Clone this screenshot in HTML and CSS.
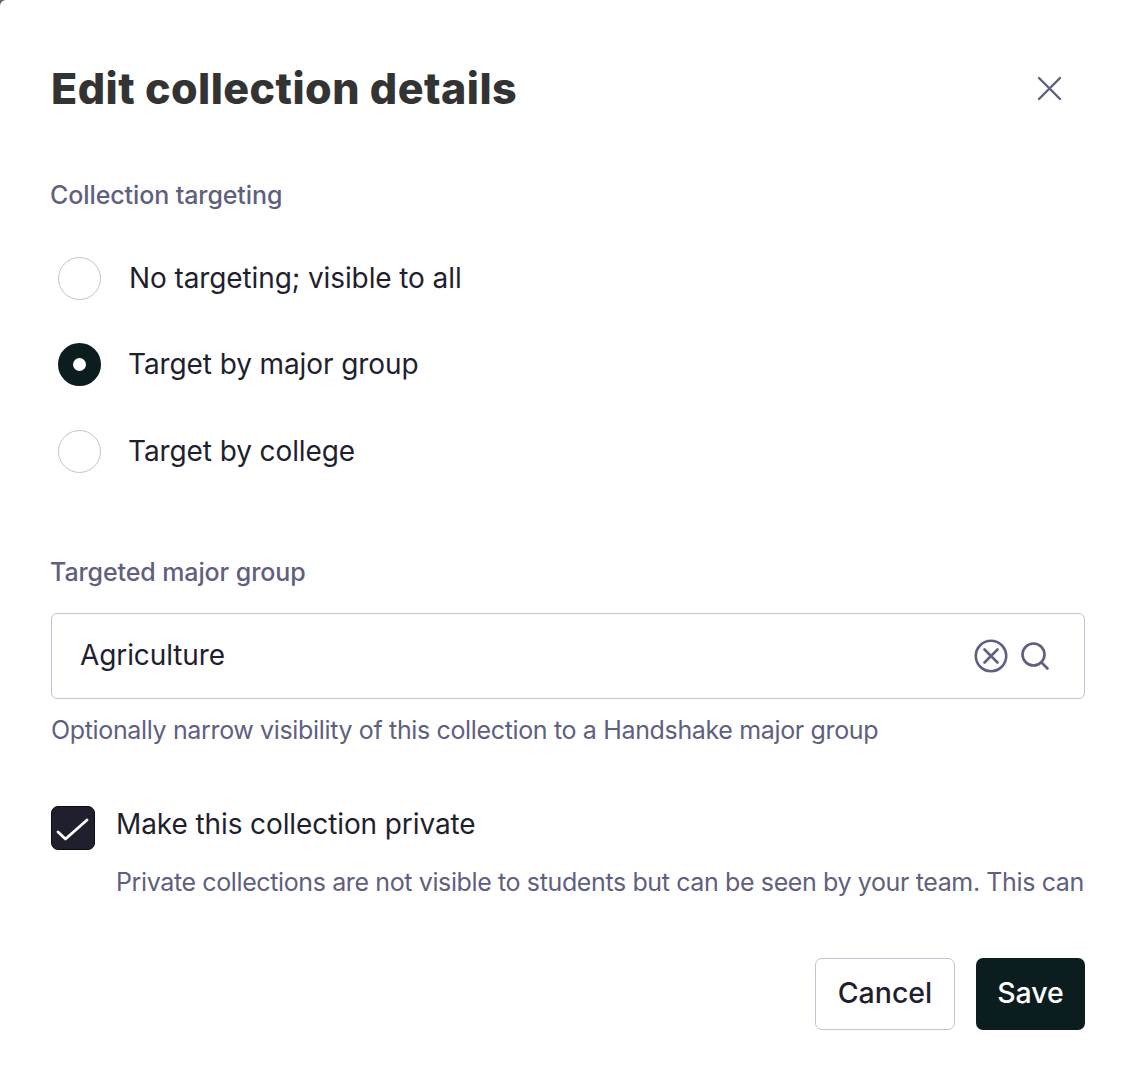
FILE: index.html
```html
<!DOCTYPE html>
<html lang="en">
<head>
    <meta charset="UTF-8">
    <title>Edit collection details</title>
    <link rel="stylesheet" href="styles.css">
</head>
<body>
    <div class="modal">
        <header class="modal-header">
            <h1 class="modal-title">Edit collection details</h1>
            <button class="close-button" aria-label="Close">
                <svg width="25" height="25" viewBox="0 0 25 25" fill="none" stroke="#5f5f7f" stroke-width="2.4" stroke-linecap="round">
                    <path d="M2 2L23 23M23 2L2 23"/>
                </svg>
            </button>
        </header>

        <section class="targeting">
            <div class="field-label">Collection targeting</div>
            <div class="radio-list">
                <label class="radio-row">
                    <span class="radio"></span>
                    <span class="radio-text first">No targeting; visible to all</span>
                </label>
                <label class="radio-row">
                    <span class="radio checked"></span>
                    <span class="radio-text">Target by major group</span>
                </label>
                <label class="radio-row">
                    <span class="radio"></span>
                    <span class="radio-text">Target by college</span>
                </label>
            </div>
        </section>

        <section class="major-group">
            <div class="field-label">Targeted major group</div>
            <div class="search-input">
                <span class="search-value">Agriculture</span>
                <svg class="clear-icon" width="34" height="34" viewBox="0 0 34 34" fill="none" stroke="#5f5f7f" stroke-width="2.6" stroke-linecap="round">
                    <circle cx="17" cy="17" r="15.2"/>
                    <path d="M10.5 10.5L23.5 23.5M23.5 10.5L10.5 23.5"/>
                </svg>
                <svg class="search-icon" width="28" height="28" viewBox="0 0 28 28" fill="none" stroke="#5f5f7f" stroke-width="2.6" stroke-linecap="round">
                    <circle cx="12.5" cy="12.5" r="11"/>
                    <path d="M20.5 20.5L26.5 26.5"/>
                </svg>
            </div>
            <div class="help-text">Optionally narrow visibility of this collection to a Handshake major group</div>
        </section>

        <section class="private-row">
            <span class="checkbox">
                <svg width="44" height="44" viewBox="0 0 44 44" fill="none" stroke="#fff" stroke-width="2.8" stroke-linecap="round" stroke-linejoin="round">
                    <path d="M7 26L14.5 33L36 14"/>
                </svg>
            </span>
            <div class="private-text">
                <div class="private-title">Make this collection private</div>
                <div class="private-help">Private collections are not visible to students but can be seen by your team. This can</div>
            </div>
        </section>

        <footer class="modal-footer">
            <button class="btn btn-cancel">Cancel</button>
            <button class="btn btn-save">Save</button>
        </footer>
    </div>
</body>
</html>
```

FILE: styles.css
```css
body {
    margin: 0;
    background-color: #666;
    font-family: Inter, "Liberation Sans", sans-serif;
    color: #1f1f30;
}

.modal {
    width: 1034px;
    height: 1076px;
    padding: 0 47px 0 51px;
    overflow: hidden;
    border-top-left-radius: 6px;
    background-color: #fff;
}

.modal-header {
    display: flex;
    justify-content: space-between;
    align-items: center;
    height: 60px;
    padding-top: 58px;
}

.modal-title {
    margin: 0;
    font-size: 43px;
    font-weight: 800;
    line-height: 60px;
    letter-spacing: 0.45px;
    color: #333;
}

.close-button {
    display: flex;
    margin-right: 23px;
    padding: 0;
    border: none;
    background: none;
}

.targeting {
    padding-top: 59px;
}

.field-label {
    margin-left: -1px;
    font-size: 25px;
    font-weight: 500;
    line-height: 36px;
    letter-spacing: -0.1px;
    color: #5f5f7f;
}

.radio-list {
    display: flex;
    flex-direction: column;
    gap: 43.4px;
    margin-top: 44px;
    padding-left: 7px;
}

.radio-row {
    display: flex;
    align-items: center;
    gap: 27px;
    height: 43px;
}

.radio {
    flex: none;
    box-sizing: border-box;
    width: 43px;
    height: 43px;
    border: 1px solid #c4c2d6;
    border-radius: 50%;
    background-color: #fff;
}

.radio.checked {
    border: 15px solid #0c1d20;
}

.radio-text {
    padding-bottom: 1.4px;
    font-size: 28px;
    line-height: 40px;
    letter-spacing: -0.1px;
}

.radio-text.first {
    margin-left: 1px;
}

.major-group {
    padding-top: 81px;
}

.search-input {
    display: flex;
    align-items: center;
    box-sizing: border-box;
    height: 86px;
    margin-top: 23px;
    padding: 0 35px 0 28px;
    border: 1px solid #c4c2d6;
    border-radius: 6px;
}

.search-value {
    flex: 1;
    padding-bottom: 2px;
    font-size: 28px;
    letter-spacing: -0.1px;
}

.clear-icon {
    margin-right: 13px;
}

.help-text {
    margin-top: 11px;
    font-size: 25px;
    line-height: 40px;
    letter-spacing: -0.35px;
    color: #5f5f7f;
}

.private-row {
    display: flex;
    gap: 21px;
    padding-top: 56px;
}

.checkbox {
    flex: none;
    display: flex;
    box-sizing: border-box;
    width: 44px;
    height: 44px;
    border: 1px solid #0c0c14;
    border-radius: 7px;
    background-color: #1f1f2e;
}

.checkbox svg {
    flex: none;
    margin: -1px;
}

.private-title {
    font-size: 28px;
    line-height: 36px;
    letter-spacing: -0.1px;
}

.private-help {
    margin-top: 22px;
    font-size: 25px;
    line-height: 36px;
    letter-spacing: -0.38px;
    color: #5f5f7f;
    white-space: nowrap;
}

.modal-footer {
    display: flex;
    justify-content: flex-end;
    gap: 21px;
    padding-top: 58px;
}

.btn {
    box-sizing: border-box;
    height: 72px;
    padding: 0 0 3px;
    border-radius: 7px;
    font-family: inherit;
    font-size: 28.5px;
    font-weight: 500;
}

.btn-cancel {
    width: 140px;
    border: 1px solid #c4c2d6;
    background-color: #fff;
    color: #1f1f30;
}

.btn-save {
    width: 109px;
    border: none;
    background-color: #0c1d20;
    color: #fff;
}
```
